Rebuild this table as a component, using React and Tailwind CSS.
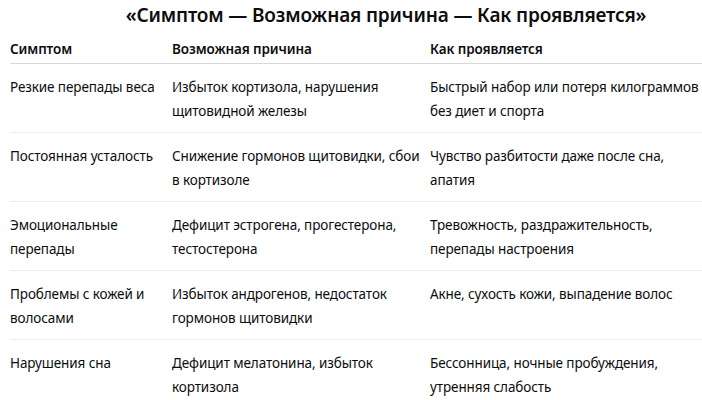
import React from "react";

const rows = [
  {
    symptom: ["Резкие перепады веса"],
    cause: ["Избыток кортизола, нарушения", "щитовидной железы"],
    sign: ["Быстрый набор или потеря килограммов", "без диет и спорта"],
  },
  {
    symptom: ["Постоянная усталость"],
    cause: ["Снижение гормонов щитовидки, сбои", "в кортизоле"],
    sign: ["Чувство разбитости даже после сна,", "апатия"],
  },
  {
    symptom: ["Эмоциональные", "перепады"],
    cause: ["Дефицит эстрогена, прогестерона,", "тестостерона"],
    sign: ["Тревожность, раздражительность,", "перепады настроения"],
  },
  {
    symptom: ["Проблемы с кожей и", "волосами"],
    cause: ["Избыток андрогенов, недостаток", "гормонов щитовидки"],
    sign: ["Акне, сухость кожи, выпадение волос"],
  },
  {
    symptom: ["Нарушения сна"],
    cause: ["Дефицит мелатонина, избыток", "кортизола"],
    sign: ["Бессонница, ночные пробуждения,", "утренняя слабость"],
  },
];

function Lines({ lines }) {
  return lines.map((line, i) => (
    <span key={i} className="block whitespace-nowrap">
      {line}
    </span>
  ));
}

export default function App() {
  return (
    <div
      className="w-[702px] h-[400px] overflow-hidden bg-white text-[#0d0d0d]"
      style={{ fontFamily: '"Noto Sans", "Open Sans", sans-serif' }}
    >
      <h1 className="pl-[70px] pt-[1px] text-center text-[19px] leading-[28px] font-semibold tracking-[-0.15px] whitespace-nowrap">
        «Симптом — Возможная причина — Как проявляется»
      </h1>
      <table className="ml-[10px] w-[760px] table-fixed border-collapse text-[13.5px] leading-[24px] tracking-[-0.1px]">
        <colgroup>
          <col className="w-[162px]" />
          <col className="w-[258px]" />
          <col />
        </colgroup>
        <thead>
          <tr className="border-b border-[#d9d9d9]">
            <th className="pt-[8px] pb-[2px] text-left align-top font-semibold">Симптом</th>
            <th className="pt-[8px] pb-[2px] text-left align-top font-semibold">Возможная причина</th>
            <th className="pt-[8px] pb-[2px] text-left align-top font-semibold">Как проявляется</th>
          </tr>
        </thead>
        <tbody>
          {rows.map((row, i) => (
            <tr key={i} className="border-b border-[#ececec]">
              <td className="pt-[11px] pb-[9px] align-top">
                <Lines lines={row.symptom} />
              </td>
              <td className="pt-[11px] pb-[9px] align-top">
                <Lines lines={row.cause} />
              </td>
              <td className="pt-[11px] pb-[9px] align-top">
                <Lines lines={row.sign} />
              </td>
            </tr>
          ))}
        </tbody>
      </table>
    </div>
  );
}
